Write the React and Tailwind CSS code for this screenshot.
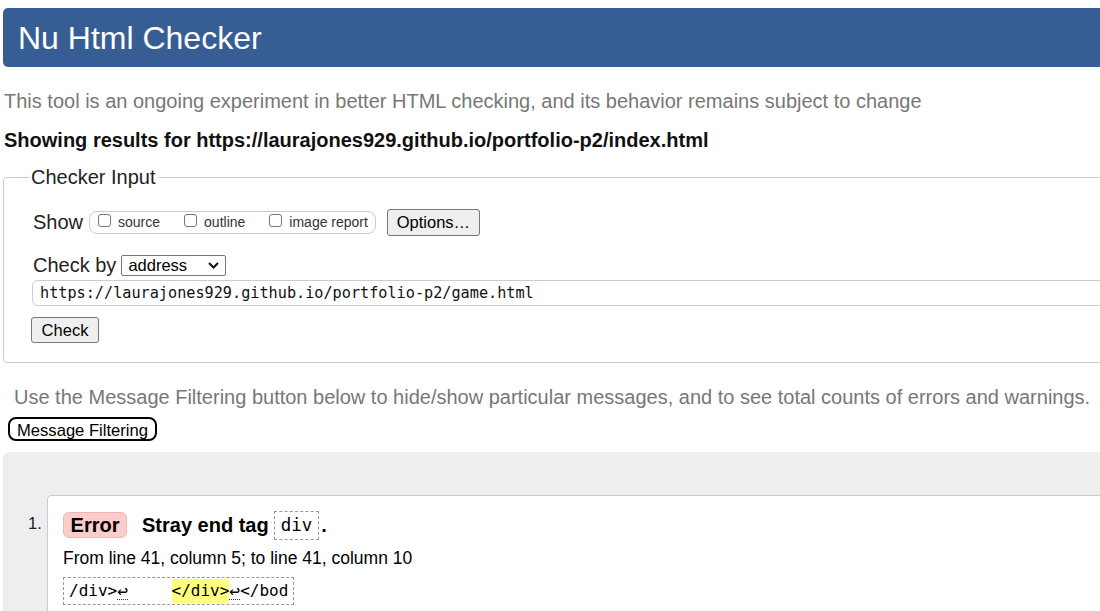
import React from "react";

function Box() {
  return <span className="inline-block w-[13px] h-[13px] border border-[#767676] rounded-[3px] bg-white mb-[4px]" />;
}

export default function App() {
  return (
    <div className="w-[1100px] h-[611px] overflow-hidden bg-white font-['Liberation_Sans',Arial,sans-serif] text-black">
      <div className="w-[1130px] pl-[3px] pt-[8px]">
        <div className="h-[59px] bg-[#375d95] rounded-l-[5px] pl-[15px] flex items-center text-white text-[32px] leading-none">
          Nu Html Checker
        </div>
        <p className="mt-[23px] pl-[1px] text-[20px] leading-[23px] text-[#777]">
          This tool is an ongoing experiment in better HTML checking, and its behavior remains subject to change
        </p>
        <p className="mt-[16px] pl-[1px] text-[20px] leading-[23px] font-bold text-[#111]">
          Showing results for https://laurajones929.github.io/portfolio-p2/index.html
        </p>
        <fieldset className="mt-[14px] border border-[#ccc] rounded-[4px] pl-[25px] pb-[19px]">
          <legend className="px-[2px] text-[20px] leading-[23px] text-[#222]">Checker Input</legend>
          <div className="pl-[4px] pt-[20px]">
            <div className="flex items-center h-[27px]">
              <span className="text-[20px] leading-[23px] text-[#222]">Show</span>
              <div className="ml-[6px] h-[23px] border border-[#ccc] rounded-[8px] flex items-center pl-[8px] pr-[7px] gap-[24px]">
                <label className="flex items-center gap-[7px] text-[14px] text-[#333]"><Box />source</label>
                <label className="flex items-center gap-[7px] text-[14px] text-[#333]"><Box />outline</label>
                <label className="flex items-center gap-[7px] text-[14px] text-[#333]"><Box />image report</label>
              </div>
              <button className="ml-[11px] w-[93px] h-[27px] bg-[#efefef] border border-[#767676] rounded-[3px] text-[16.5px] text-black">
                Options…
              </button>
            </div>
            <div className="mt-[18px] flex items-center h-[22px]">
              <span className="text-[20px] leading-[23px] text-[#222]">Check by</span>
              <div className="ml-[5px] w-[105px] h-[21px] border border-[#767676] rounded-[2px] flex items-center justify-between pl-[6px] pr-[6px] text-[16.5px]">
                <span>address</span>
                <svg width="11" height="7" viewBox="0 0 11 7" fill="none">
                  <path d="M1 1l4.5 4.5L10 1" stroke="#111" strokeWidth="2" />
                </svg>
              </div>
            </div>
            <div className="mt-[4px] -ml-[1px] h-[26px] border border-[#ccc] rounded-[6px] flex items-center pl-[7px] font-['DejaVu_Sans_Mono',monospace] text-[15.2px] text-[#111]">
              https://laurajones929.github.io/portfolio-p2/game.html
            </div>
            <button className="mt-[11px] -ml-[2px] w-[68px] h-[26px] bg-[#efefef] border border-[#767676] rounded-[3px] text-[16.5px] text-black block">
              Check
            </button>
          </div>
        </fieldset>
        <p className="mt-[23px] pl-[11px] text-[20px] leading-[23px] text-[#777]">
          Use the Message Filtering button below to hide/show particular messages, and to see total counts of errors and warnings.
        </p>
        <button className="mt-[8px] ml-[5px] w-[149px] h-[24px] border-2 border-black rounded-[8px] text-[16.6px] text-black bg-white block">
          Message Filtering
        </button>
        <div className="mt-[11px] bg-[#eeeeee] rounded-tl-[6px] pt-[43px] pl-[25px] h-[200px] flex items-start">
          <span className="w-[19px] mt-[18px] text-[16.5px] leading-[20px] text-[#222]">1.</span>
          <div className="flex-1 h-[200px] bg-white border border-[#ccc] rounded-tl-[4px] pl-[15px] pt-[14px]">
            <div className="flex items-center">
              <span className="w-[64px] h-[26px] bg-[#ffcccc] border border-[#e8b8b8] rounded-[6px] flex items-center justify-center text-[20px] font-bold">
                Error
              </span>
              <span className="ml-[15px] text-[20px] font-bold">Stray end tag</span>
              <span className="ml-[5px] h-[29px] border border-dashed border-[#999] px-[6px] flex items-center font-['DejaVu_Sans_Mono',monospace] text-[17.5px]">
                div
              </span>
              <span className="ml-[2px] text-[20px] font-bold">.</span>
            </div>
            <p className="mt-[8px] text-[17.5px] leading-[21px]">From line 41, column 5; to line 41, column 10</p>
            <div className="mt-[8px] inline-flex items-center h-[28px] border border-dashed border-[#999] px-[5px] font-['DejaVu_Sans_Mono',monospace] text-[16px] whitespace-pre">
              <span>/div&gt;</span>
              <span className="border-b border-dotted border-[#333] leading-[16px] text-[18px]">↩</span>
              <span>    </span>
              <span className="inline-block w-[5px]" />
              <span className="bg-[#ffff80]">&lt;/div&gt;</span>
              <span className="border-b border-dotted border-[#333] leading-[16px] text-[18px]">↩</span>
              <span>&lt;/bod</span>
            </div>
          </div>
        </div>
      </div>
    </div>
  );
}
